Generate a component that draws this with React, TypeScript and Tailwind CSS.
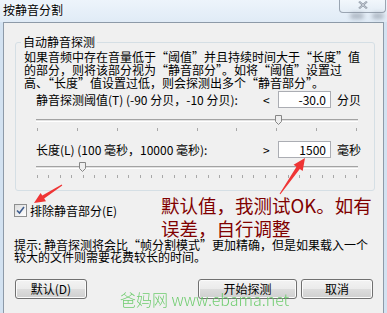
import React from "react";

const CJK = "font-['Noto_Sans_CJK_SC',sans-serif]";

function Slider({
  value,
  min,
  max,
  ticks,
  className = "",
}: {
  value: number;
  min: number;
  max: number;
  ticks: number;
  className?: string;
}) {
  const pct = ((value - min) / (max - min)) * 100;
  return (
    <div className={`relative w-[322px] ${className}`}>
      <div className="h-[3px] border-t border-b border-t-[#a3a3a3] border-b-white bg-[#e2e2e2]" />
      <div className="mt-[6px] flex justify-between px-px">
        {Array.from({ length: ticks }).map((_, i) => (
          <span key={i} className="h-[3px] w-px bg-[#a8a8a8]" />
        ))}
      </div>
      <svg
        className="absolute top-[-4px]"
        style={{ left: `calc(${pct}% - 3px)` }}
        width="7"
        height="10"
        viewBox="0 0 7 10"
      >
        <path d="M0.5 0.5H6.5V6.5L3.5 9.5L0.5 6.5Z" fill="#eeeeee" stroke="#868686" />
      </svg>
    </div>
  );
}

function ValueRow({
  label,
  sign,
  value,
  unit,
  className = "",
}: {
  label: string;
  sign: string;
  value: string;
  unit: string;
  className?: string;
}) {
  return (
    <div className={`flex h-[17px] items-center text-[12px] leading-[17px] ${className}`}>
      <span className="flex-1 whitespace-nowrap">{label}</span>
      <span className="w-[15px]">{sign}</span>
      <div className="h-[17px] w-[53px] border border-[#abadb3] bg-white pr-[4px] text-right leading-[15px]">
        {value}
      </div>
      <span className="ml-[6px] w-[24px]">{unit}</span>
    </div>
  );
}

function Button({ label, className = "" }: { label: string; className?: string }) {
  return (
    <div
      className={`h-[20px] rounded-[3px] border border-[#707070] bg-[linear-gradient(#f3f3f3_0%,#ebebeb_50%,#dddddd_51%,#cfcfcf_100%)] text-center text-[12px] leading-[18px] shadow-[inset_0_0_0_1px_#fbfbfb] ${className}`}
    >
      {label}
    </div>
  );
}

function Arrows() {
  return (
    <svg className="pointer-events-none absolute inset-0" width="387" height="313">
      <polygon
        points="280.4,194.3 299.8,169 302.7,171 305,158 293.6,164.7 296.5,166.7 279.6,193.7"
        fill="#ef3535"
      />
      <polygon
        points="62.3,185.4 44.2,198.6 46,201.3 34,203 40.6,192.9 42.3,195.5 61.7,184.6"
        fill="#ef3535"
      />
    </svg>
  );
}

export default function App() {
  return (
    <div className={`relative flex h-[313px] w-[387px] flex-col overflow-hidden bg-[#d3e2f1] text-black ${CJK}`}>
      {/* title bar */}
      <div className="relative flex h-[22px] items-start justify-between bg-[linear-gradient(#edf4fb,#e0ebf6)]">
        <span className="ml-[3px] mt-[3px] text-[12px] leading-[14px] [text-shadow:0_0_4px_#ffffff]">
          按静音分割
        </span>
        <span className="absolute left-[350px] top-[13px] h-[6px] w-[14px] rounded-full bg-[#7a8492] opacity-50 blur-[2px]" />
        <span className="absolute left-[372px] top-[13px] h-[6px] w-[12px] rounded-full bg-[#7a8492] opacity-50 blur-[2px]" />
        <div className="mr-px flex h-[13px] w-[47px] items-start justify-center rounded-b-[4px] border border-t-0 border-[#9aa5b2] bg-[linear-gradient(#f2f7fc,#e4edf6)]">
          <svg width="10" height="8" viewBox="0 0 10 8" className="mt-[1px]">
            <path d="M1 0.5L9 7.5M9 0.5L1 7.5" stroke="#8a93a0" strokeWidth="2" />
            <path d="M1 0.5L9 7.5M9 0.5L1 7.5" stroke="#eef3f8" strokeWidth="0.6" />
          </svg>
        </div>
      </div>

      {/* client area */}
      <div className="mx-[3px] flex flex-1 flex-col border-x border-t border-[#8d9aa8] bg-[#f0f0f0]">
        <fieldset className="ml-[11px] mt-[12px] w-[360px] rounded-[3px] border border-[#d5dfe5] pb-[12px]">
          <legend className="ml-[5px] px-[2px] text-[12px] leading-[14px]">自动静音探测</legend>
          <p className="mt-px pl-[8px] text-[12px] leading-[13px]">
            如果音频中存在音量低于“阈值”并且持续时间大于“长度”值
            <br />
            的部分，则将该部分视为“静音部分”。如将“阈值”设置过
            <br />
            高、“长度”值设置过低，则会探测出多个“静音部分”。
          </p>
          <div className="pl-[20px] pr-[13px]">
            <ValueRow
              className="mt-[2px]"
              label="静音探测阈值(T) (-90 分贝，-10 分贝):"
              sign="<"
              value="-30.0"
              unit="分贝"
            />
            <Slider className="mt-[11px]" value={-30} min={-90} max={-10} ticks={9} />
            <ValueRow
              className="mt-[10px]"
              label="长度(L) (100 毫秒，10000 毫秒):"
              sign=">"
              value="1500"
              unit="毫秒"
            />
            <Slider className="mt-[8px]" value={1500} min={100} max={10000} ticks={29} />
          </div>
        </fieldset>

        <div className="ml-[10px] mt-[13px] flex items-center gap-[3px] text-[12px] leading-[13px]">
          <div className="flex h-[13px] w-[13px] items-center justify-center border border-[#8e8f8f] bg-[linear-gradient(135deg,#dcdcdc,#ffffff)]">
            <svg width="9" height="9" viewBox="0 0 9 9">
              <path d="M1 4.5L3.5 7L8 1" fill="none" stroke="#3f5d8e" strokeWidth="1.6" />
            </svg>
          </div>
          <span>排除静音部分(E)</span>
        </div>

        <p className="ml-[10px] mt-[22px] text-[12px] leading-[12px]">
          提示: 静音探测将会比“帧分割模式”更加精确，但是如果载入一个
          <br />
          较大的文件则需要花费较长的时间。
        </p>

        <div className="ml-[11px] mr-[10px] mt-[16px] flex">
          <Button label="默认(D)" className="w-[72px]" />
          <div className="flex-1" />
          <Button label="开始探测" className="w-[99px]" />
          <Button label="取消" className="ml-[4px] w-[72px]" />
        </div>
      </div>

      {/* annotation added over the screenshot */}
      <div className="absolute left-[161px] top-[194px] text-[18.5px] leading-[23px] text-[#800000]">
        默认值，我测试OK。如有
        <br />
        误差，自行调整
      </div>
      <div className="absolute left-[120px] top-[289px] whitespace-nowrap text-[16px] font-light leading-[20px] text-[#63c963] opacity-90">
        爸妈网 www.ebama.net
      </div>
      <Arrows />
    </div>
  );
}
